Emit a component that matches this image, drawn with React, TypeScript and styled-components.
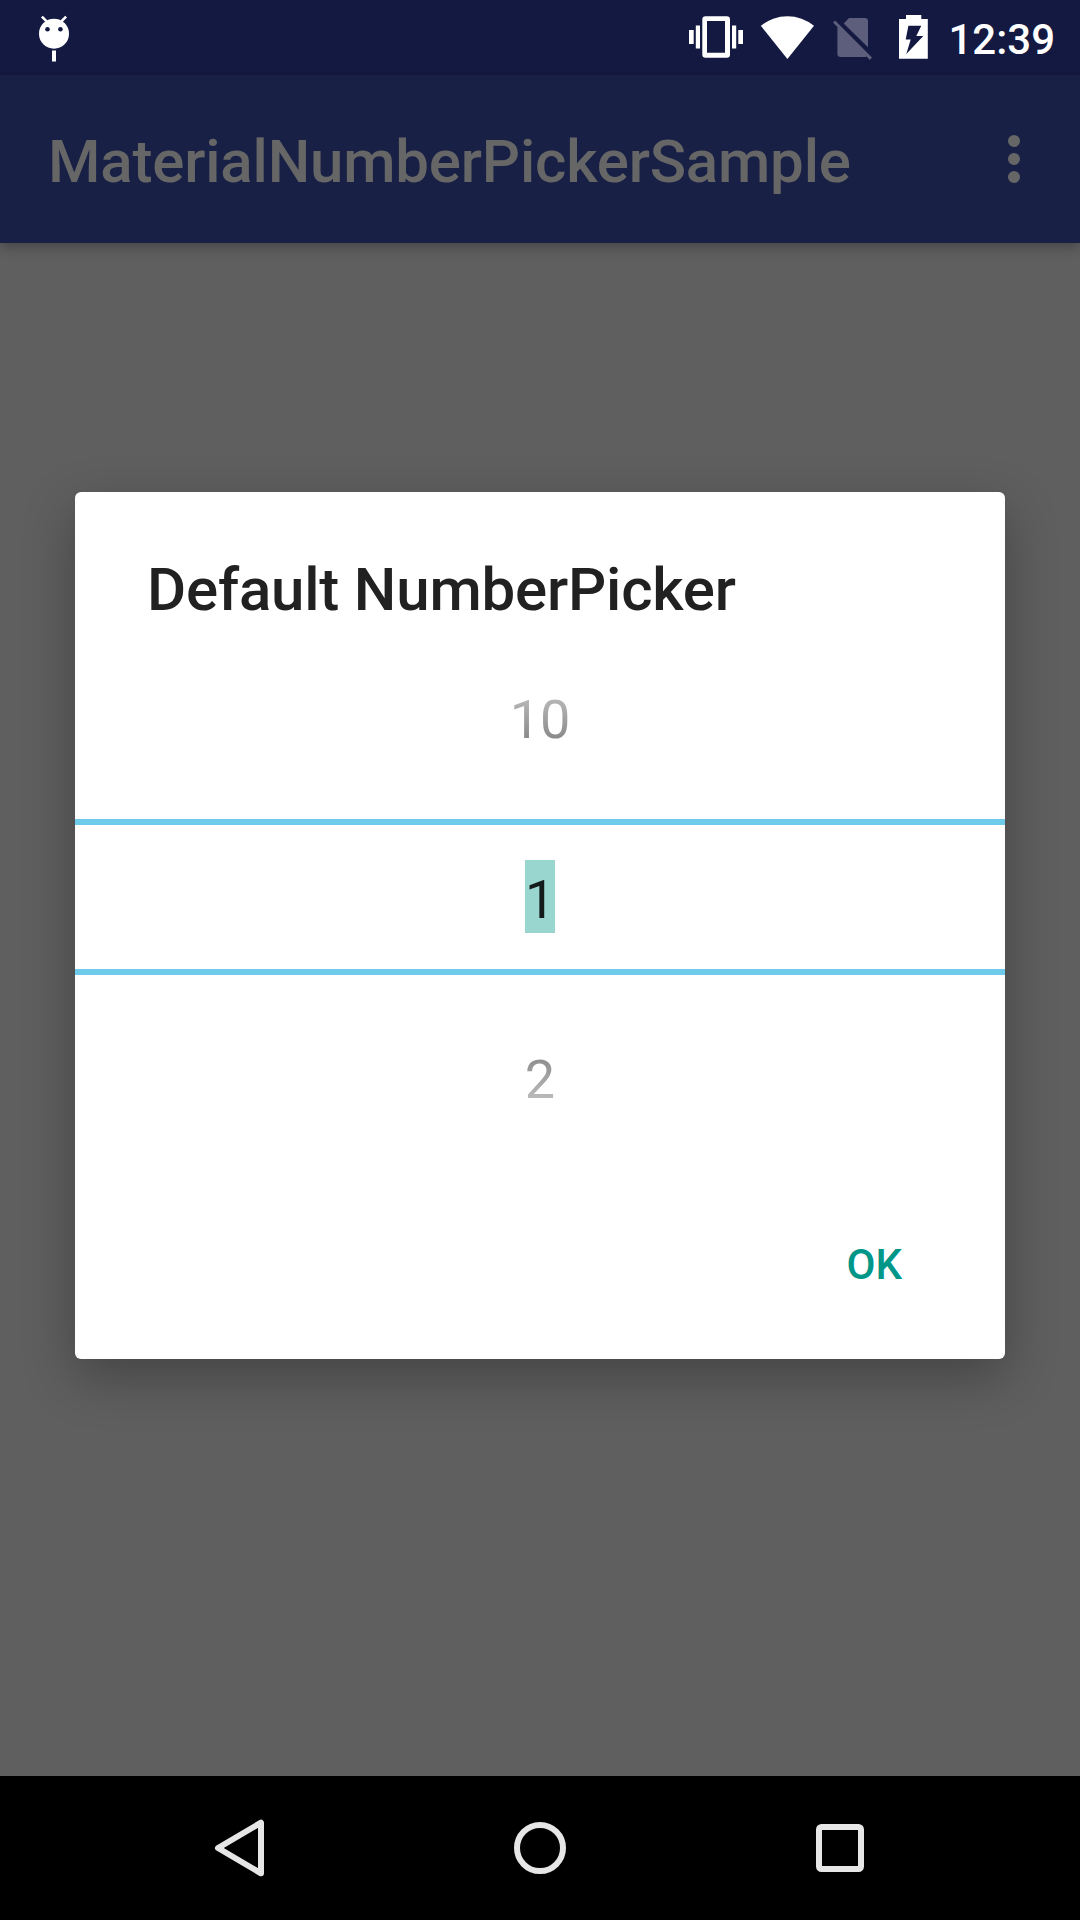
import React from "react";
import styled, { createGlobalStyle } from "styled-components";

const GlobalStyle = createGlobalStyle`
  * { box-sizing: border-box; }
  body { margin: 0; background: #000; }
`;

const Screen = styled.div`
  display: flex;
  flex-direction: column;
  width: 1080px;
  height: 1920px;
  overflow: hidden;
  background: #5f5f5f;
  font-family: Roboto, "Liberation Sans", sans-serif;
`;

const StatusBar = styled.header`
  display: flex;
  align-items: center;
  flex: none;
  height: 75px;
  padding: 0 24px 0 36px;
  background: linear-gradient(#141941 70px, #11163a 75px);
`;

const StatusIcon = styled.svg<{ $gap?: number }>`
  display: block;
  flex: none;
  height: 75px;
  margin-right: ${(p) => p.$gap ?? 0}px;
`;

const Spacer = styled.div`
  flex: 1;
`;

const Clock = styled.time`
  width: 108px;
  height: 75px;
  padding-right: 1px;
  line-height: 80px;
  font-size: 42px;
  font-weight: 500;
  text-align: right;
  white-space: nowrap;
  color: #fff;
`;

const Toolbar = styled.div`
  display: flex;
  align-items: center;
  justify-content: space-between;
  flex: none;
  height: 168px;
  padding: 0 60px 0 48px;
  background: #192046;
  box-shadow: 0 4px 12px rgba(0, 0, 0, 0.28);
  clip-path: inset(0 0 -30px 0);
`;

const ToolbarTitle = styled.h1`
  margin: 0;
  padding-top: 5px;
  font-size: 60px;
  line-height: 70px;
  font-weight: 500;
  letter-spacing: -0.18px;
  color: #666;
`;

const MenuButton = styled.button`
  display: flex;
  flex-direction: column;
  align-items: center;
  gap: 6px;
  padding: 0;
  border: 0;
  background: none;
`;

const Dot = styled.span`
  width: 12px;
  height: 12px;
  border-radius: 50%;
  background: #666;
`;

const Content = styled.main`
  flex: 1;
  padding: 249px 75px 0;
`;

const Dialog = styled.section`
  display: flex;
  flex-direction: column;
  height: 867px;
  border-radius: 6px;
  background: #fff;
  box-shadow: 0 18px 52px rgba(0, 0, 0, 0.29);
`;

const DialogTitle = styled.h2`
  margin: 0;
  padding: 63px 72px 0;
  height: 135px;
  font-size: 60px;
  line-height: 70px;
  font-weight: 500;
  letter-spacing: -0.19px;
  color: #212121;
`;

const Picker = styled.div`
  display: flex;
  flex-direction: column;
  height: 540px;
`;

const PickerRow = styled.div<{ $fade: "up" | "down" }>`
  height: 192px;
  line-height: 63px;
  padding-top: ${(p) => (p.$fade === "up" ? 61 : 73)}px;
  font-size: 54px;
  text-align: center;
  color: transparent;
  background: ${(p) =>
    p.$fade === "up"
      ? "linear-gradient(#fefefe 8px, #212121 206px)"
      : "linear-gradient(#212121 -14px, #fefefe 184px)"};
  background-clip: text;
  -webkit-background-clip: text;
`;

const SelectedRow = styled.div`
  display: flex;
  justify-content: center;
  align-items: flex-start;
  height: 156px;
  padding-top: 35px;
  border: solid #6ecbec;
  border-width: 6px 0;
`;

const SelectedValue = styled.span`
  width: 30px;
  height: 73px;
  line-height: 79px;
  text-align: center;
  font-size: 54px;
  color: #141c1b;
  background: #99d6cf;
`;

const Actions = styled.div`
  display: flex;
  justify-content: flex-end;
  padding: 73px 103px 0 0;
`;

const ActionButton = styled.button`
  padding: 0;
  border: 0;
  background: none;
  font-family: inherit;
  font-size: 42px;
  line-height: 50px;
  font-weight: 500;
  color: #009688;
`;

const NavBar = styled.nav`
  display: flex;
  align-items: center;
  justify-content: center;
  gap: 240px;
  flex: none;
  height: 144px;
  background: #000;
`;

const NavIcon = styled.svg`
  display: block;
  width: 60px;
  height: 60px;
  fill: none;
  stroke: #e6e6e6;
  stroke-width: 6;
  stroke-linejoin: round;
`;

export default function App() {
  return (
    <>
      <GlobalStyle />
      <Screen>
        <StatusBar>
          <StatusIcon width="36" viewBox="36 0 36 75" fill="#fff">
            <circle cx="54" cy="33.7" r="15" />
            <path d="M41.9 16.6l5 5M66.1 16.6l-5 5" stroke="#fff" strokeWidth="2.6" />
            <circle cx="47.5" cy="29.3" r="2.3" fill="#141941" />
            <circle cx="60.4" cy="29.3" r="2.3" fill="#141941" />
            <path d="M52 50.5h4v11h-4z" />
          </StatusIcon>
          <Spacer />
          <StatusIcon width="54" viewBox="689 0 54 75" fill="#fff" $gap={17}>
            <path
              fillRule="evenodd"
              d="M705.5 16.3h21.3a3.2 3.2 0 0 1 3.2 3.2v35a3.2 3.2 0 0 1-3.2 3.2h-21.3a3.2 3.2 0 0 1-3.2-3.2v-35a3.2 3.2 0 0 1 3.2-3.2zM707 21v31.7h18V21z"
            />
            <path d="M689 30h4.7v14H689zM695.8 25.6h4.2v22.8h-4.2zM732 25.6h4.2v22.8H732zM738.3 30h4.7v14h-4.7z" />
          </StatusIcon>
          <StatusIcon width="55" viewBox="760 0 55 75" fill="#fff" $gap={18}>
            <path d="M760.8 25.8A42 42 0 0 1 814 25.8L787.4 59z" />
          </StatusIcon>
          <StatusIcon width="39" viewBox="833 0 39 75" fill="#5c5e7b" $gap={27}>
            <path d="M843.7 23.4L849 18h16a3 3 0 0 1 3 3v26.3z" />
            <path d="M835.1 20.4L872 57.6 869.8 60 866.6 56.5Q865.8 57 864.8 57H840.6a3.2 3.2 0 0 1-3.2-3.2V27L833 22.6z" />
          </StatusIcon>
          <StatusIcon width="29" viewBox="899 0 29 75" fill="#fff" $gap={20}>
            <path
              fillRule="evenodd"
              d="M899 19h7v-4h15.3v4h6.5v39.8H899zM908.4 25.7L905.7 39.5h5L906.3 54l17-18h-7l5-10.3z"
            />
          </StatusIcon>
          <Clock>12:39</Clock>
        </StatusBar>

        <Toolbar>
          <ToolbarTitle>MaterialNumberPickerSample</ToolbarTitle>
          <MenuButton aria-label="More options">
            <Dot />
            <Dot />
            <Dot />
          </MenuButton>
        </Toolbar>

        <Content>
          <Dialog role="dialog">
            <DialogTitle>Default NumberPicker</DialogTitle>
            <Picker>
              <PickerRow $fade="up">10</PickerRow>
              <SelectedRow>
                <SelectedValue>1</SelectedValue>
              </SelectedRow>
              <PickerRow $fade="down">2</PickerRow>
            </Picker>
            <Actions>
              <ActionButton>OK</ActionButton>
            </Actions>
          </Dialog>
        </Content>

        <NavBar>
          <NavIcon viewBox="0 0 60 60">
            <path d="M8 30L51 4.7v50.6z" />
          </NavIcon>
          <NavIcon viewBox="0 0 60 60">
            <circle cx="30" cy="30" r="23" />
          </NavIcon>
          <NavIcon viewBox="0 0 60 60">
            <rect x="9" y="9" width="42" height="42" rx="2.5" />
          </NavIcon>
        </NavBar>
      </Screen>
    </>
  );
}
